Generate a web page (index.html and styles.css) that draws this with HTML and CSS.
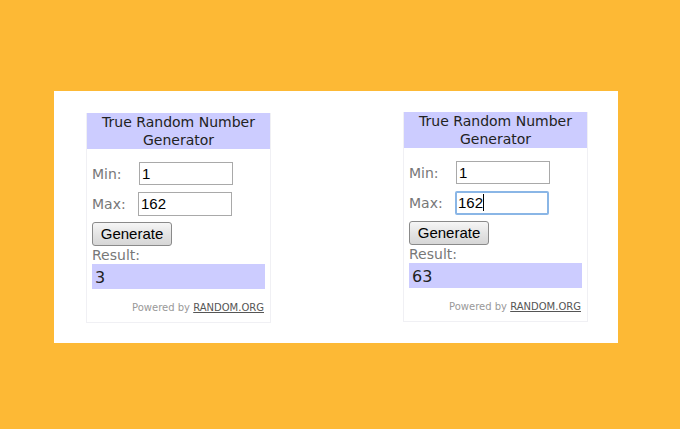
FILE: index.html
```html
<!DOCTYPE html>
<html lang="en">
<head>
    <meta charset="UTF-8">
    <meta name="viewport" content="width=device-width, initial-scale=1.0">
    <title>True Random Number Generator</title>
    <link rel="stylesheet" href="styles.css">
</head>
<body>
    <div class="panel">
        <div class="widget first">
            <div class="head">True Random Number<br>Generator</div>
            <div class="body">
                <div class="row">
                    <span class="label">Min:</span>
                    <div class="field">1</div>
                </div>
                <div class="row max">
                    <span class="label">Max:</span>
                    <div class="field">162</div>
                </div>
                <div class="btn">Generate</div>
                <div class="label result-label">Result:</div>
                <div class="result">3</div>
                <div class="powered">Powered by <u>RANDOM.ORG</u></div>
            </div>
        </div>

        <div class="widget">
            <div class="head">True Random Number<br>Generator</div>
            <div class="body">
                <div class="row">
                    <span class="label">Min:</span>
                    <div class="field">1</div>
                </div>
                <div class="row max">
                    <span class="label">Max:</span>
                    <div class="field focus">162<span class="caret"></span></div>
                </div>
                <div class="btn">Generate</div>
                <div class="label result-label">Result:</div>
                <div class="result">63</div>
                <div class="powered">Powered by <u>RANDOM.ORG</u></div>
            </div>
        </div>
    </div>
</body>
</html>
```

FILE: styles.css
```css
body {
    margin: 0;
    height: 429px;
    background: #fdb935;
    font-family: "DejaVu Sans", Verdana, sans-serif;
    overflow: hidden;
}
.panel {
    margin: 91px 0 0 54px;
    width: 532px;
    height: 231px;
    padding: 21px 0 0 32px;
    background: #fff;
    display: flex;
    align-items: flex-start;
    gap: 132px;
}
.widget {
    width: 183px;
    border: 1px solid #f0f0f4;
    border-top: none;
}
.widget.first {
    margin-top: 1px;
}
.head {
    height: 36px;
    background: #ccccff;
    color: #222;
    font-size: 14px;
    line-height: 18px;
    text-align: center;
}
.body {
    padding: 13px 5px 8px 5px;
}
.label {
    color: #777;
    font-size: 14px;
}
.row {
    display: grid;
    grid-template-columns: 47px 94px;
    align-items: center;
    height: 23px;
}
.row.max {
    margin-top: 7px;
    height: 24px;
    grid-template-columns: 46px 94px;
}
.field {
    box-sizing: border-box;
    height: 100%;
    border: 1px solid #a9a9a9;
    padding: 0 2px;
    font-family: "Liberation Sans", Arial, sans-serif;
    font-size: 15px;
    line-height: 21px;
    color: #000;
}
.field.focus {
    border: 2px solid #8ab6e6;
    border-radius: 2px;
    line-height: 20px;
    padding-left: 1px;
}
.caret {
    display: inline-block;
    width: 1px;
    height: 17px;
    background: #000;
    vertical-align: -3px;
}
.btn {
    box-sizing: border-box;
    width: 80px;
    height: 24px;
    margin-top: 6px;
    border: 1px solid #8a8a8a;
    border-radius: 3px;
    background: linear-gradient(#f6f6f6, #e4e4e4 50%, #d6d6d6);
    font-family: "Liberation Sans", Arial, sans-serif;
    font-size: 15px;
    line-height: 22px;
    text-align: center;
    color: #000;
}
.result-label {
    height: 18px;
    line-height: 18px;
}
.result {
    height: 25px;
    background: #ccccff;
    color: #222;
    font-size: 16px;
    line-height: 27px;
    padding-left: 3px;
}
.powered {
    margin-top: 13px;
    padding-right: 1px;
    text-align: right;
    font-size: 10px;
    line-height: 12px;
    color: #999;
}
.powered u {
    color: #555;
}
```
